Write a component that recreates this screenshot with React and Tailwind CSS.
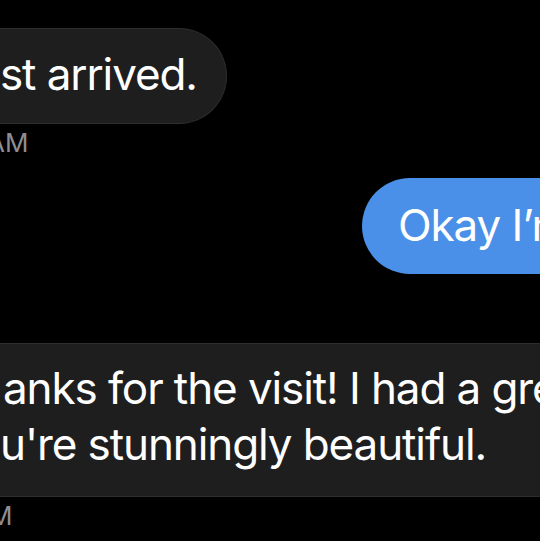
export default function App() {
  return (
    <div
      className="w-[540px] h-[541px] bg-black overflow-hidden text-white"
      style={{ fontFamily: 'Inter, "Noto Sans", sans-serif' }}
    >
      <div className="pt-[28px] flex flex-col">
        <div className="h-[96px] w-[227px] rounded-r-[48px] bg-[#1e1e1f] border border-l-0 border-[#2e2e30] flex items-center">
          <span className="text-[44px] leading-none tracking-[-1.1px] whitespace-nowrap -mt-[4px]">st arrived.</span>
        </div>
        <div className="mt-[3px] text-[26px] leading-[32px] text-[#8d8d92] whitespace-nowrap -ml-[13px]">AM</div>

        <div className="mt-[19px] self-end h-[96px] w-[178px] rounded-l-[48px] bg-[#4a8fe8] flex items-center pl-[36px] overflow-hidden">
          <span className="text-[44px] leading-none tracking-[-1.1px] whitespace-nowrap -mt-[2px]">Okay I’m on my way</span>
        </div>

        <div className="mt-[69px] h-[154px] bg-[#1e1e1f] border-y border-[#2e2e30] flex flex-col justify-center pb-[8px] overflow-hidden">
          <div className="text-[44px] leading-[56px] tracking-[-1.1px] whitespace-nowrap pl-[3px]">anks for the visit! I had a great time.</div>
          <div className="text-[44px] leading-[56px] tracking-[-1.1px] whitespace-nowrap">u're stunningly beautiful.</div>
        </div>
        <div className="mt-[3px] text-[26px] leading-[32px] text-[#8d8d92] whitespace-nowrap -ml-[11px]">M</div>
      </div>
    </div>
  )
}
